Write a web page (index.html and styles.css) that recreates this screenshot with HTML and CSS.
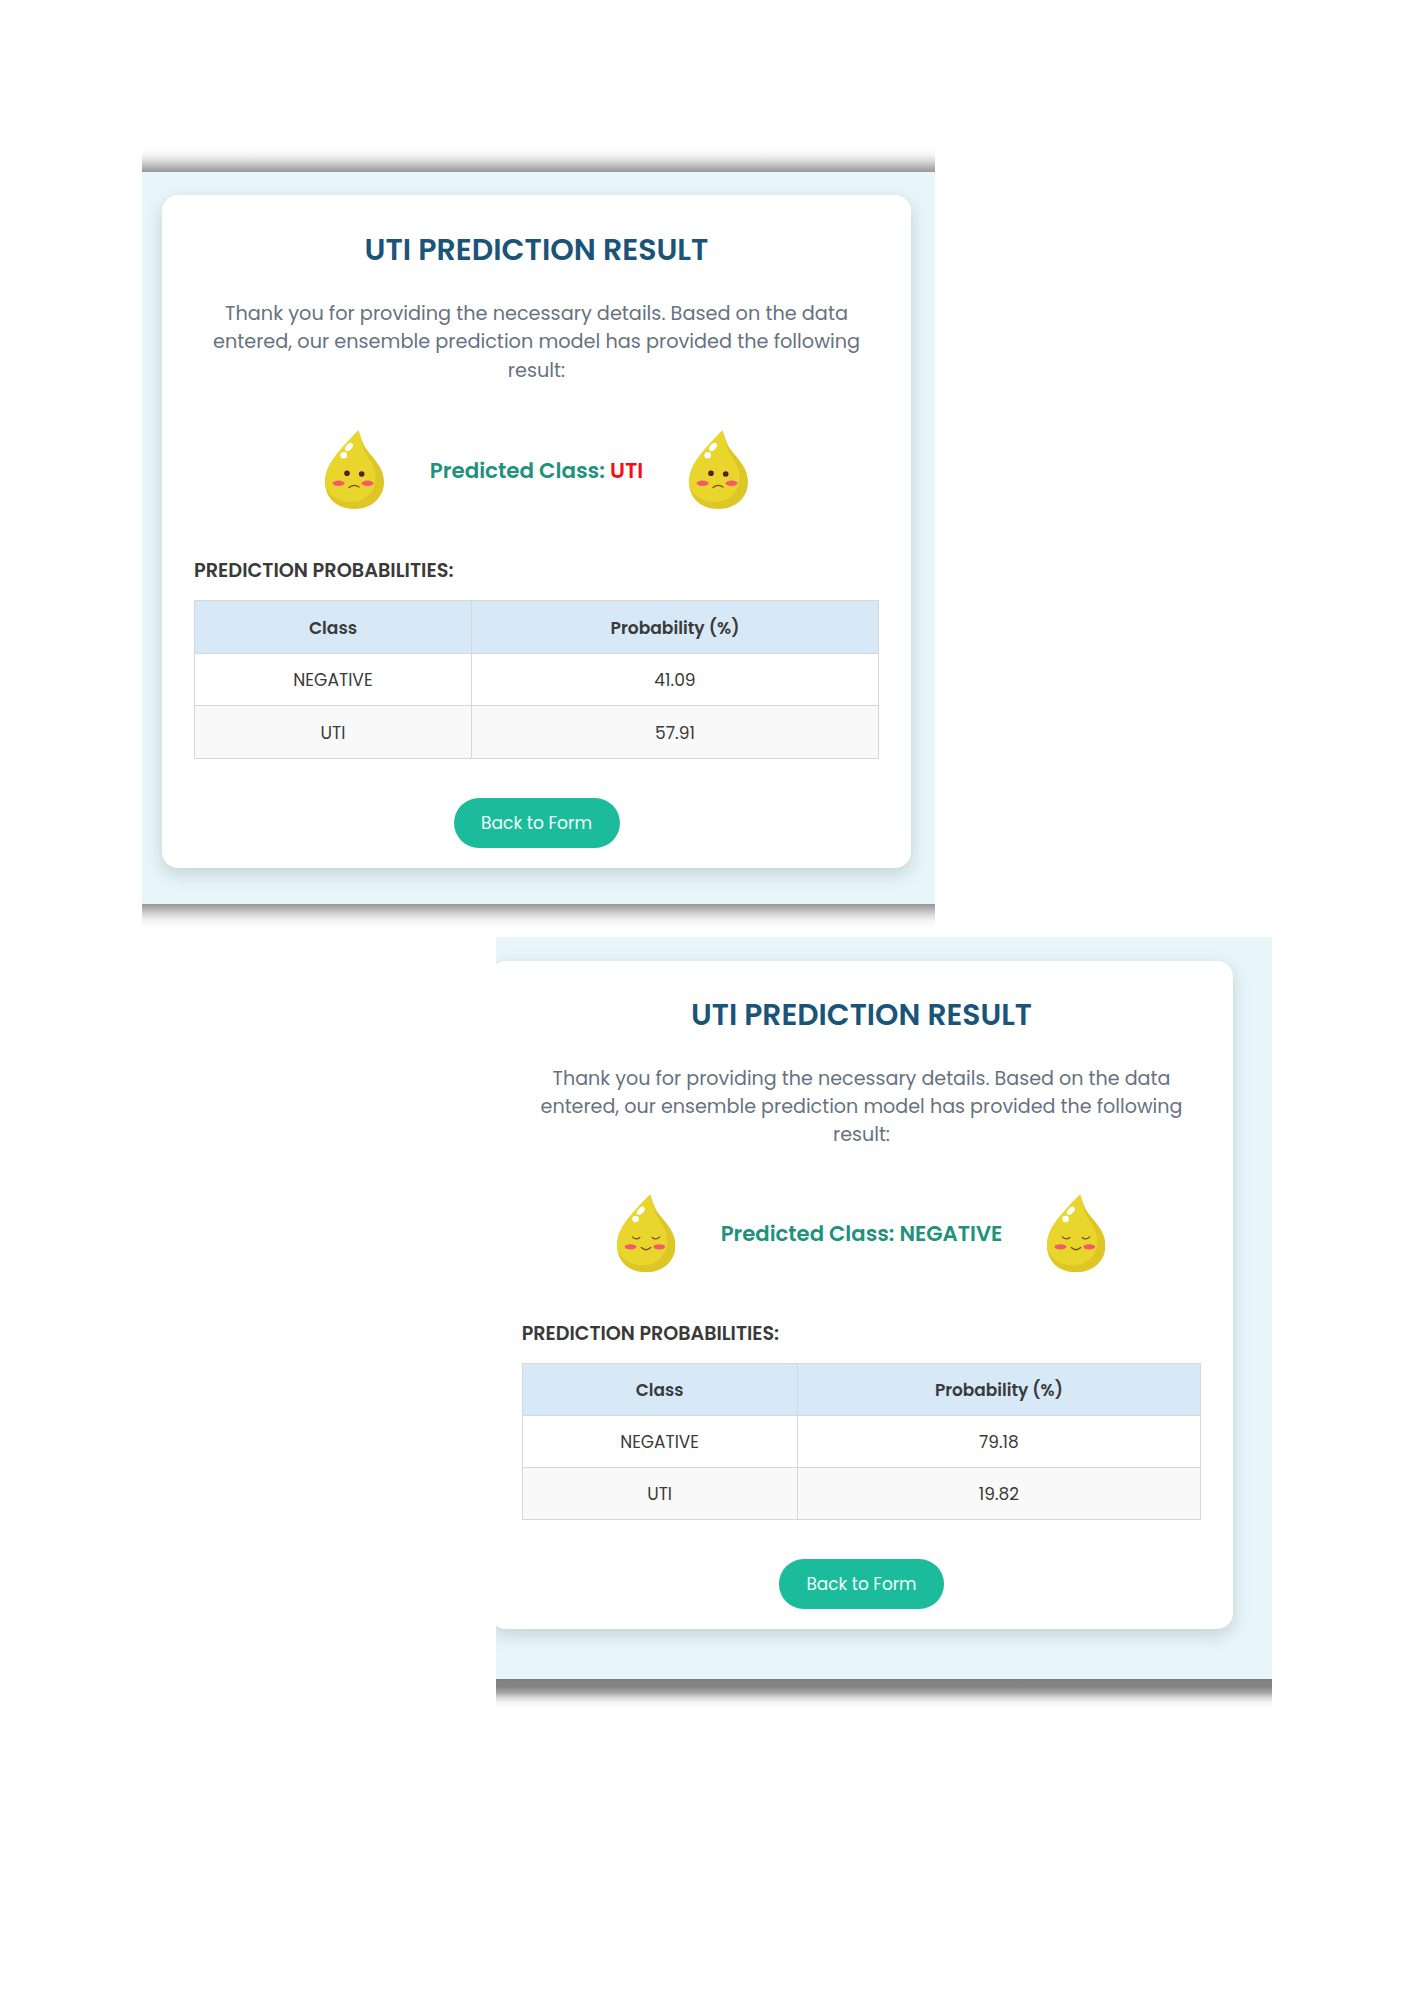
FILE: index.html
```
<!DOCTYPE html>
<html lang="en">
<head>
<meta charset="utf-8">
<title>UTI Prediction Result</title>
<link rel="stylesheet" href="styles.css">
</head>
<body>
<svg width="0" height="0" class="defs" aria-hidden="true">
  <defs>
    <clipPath id="dropClip"><path d="M33.500 0.500C36 7 37 13 42 20C49 29 59 38 59 52C59 68 46 79 29.500 79C12 79 0 68 0 52C0 38 9 27 17 18C23 11 28 6 33.500 0.500Z"/></clipPath>
    <symbol id="drop" viewBox="0 0 59 79">
      <g clip-path="url(#dropClip)">
        <rect width="59" height="79" fill="#dfc627"/>
        <path d="M0 0H34C36 8 36 14 40 22C44 30 50.500 35 50.500 48C50.500 62 40 72 26 72C14 72 5 66 0 56Z" fill="#e8d62d"/>
      </g>
      <ellipse cx="24" cy="17" rx="2.900" ry="4.900" transform="rotate(43 24 17)" fill="#fff"/>
      <circle cx="18.700" cy="25.300" r="3.300" fill="#fff"/>
      <ellipse cx="13.600" cy="53.300" rx="5.900" ry="2.700" fill="#f5586a"/>
      <ellipse cx="42.600" cy="53.300" rx="5.900" ry="2.700" fill="#f5586a"/>
    </symbol>
    <symbol id="sad" viewBox="0 0 59 79">
      <use href="#drop" width="59" height="79"/>
      <circle cx="22" cy="43.300" r="2.800" fill="#5c1a2c"/>
      <circle cx="36.700" cy="44" r="2.800" fill="#5c1a2c"/>
      <path d="M24 57.600Q29 53.400 34 57" fill="none" stroke="#7d4a1c" stroke-width="1.300" stroke-linecap="round"/>
    </symbol>
    <symbol id="happy" viewBox="0 0 59 79">
      <use href="#drop" width="59" height="79"/>
      <path d="M15.500 43.200Q19.500 47 23 43.800M35.500 43.800Q39 47 43 43.200M24.500 54Q29.300 58.500 34 54" fill="none" stroke="#7d4a1c" stroke-width="1.300" stroke-linecap="round"/>
    </symbol>
  </defs>
</svg>

<section class="panel panel-uti">
  <main class="card">
    <h2 class="title">UTI PREDICTION RESULT</h2>
    <p class="intro">Thank you for providing the necessary details. Based on the data<br>entered, our ensemble prediction model has provided the following<br>result:</p>
    <div class="result">
      <svg class="drop"><use href="#sad"/></svg>
      <p class="verdict">Predicted Class: <span class="positive">UTI</span></p>
      <svg class="drop"><use href="#sad"/></svg>
    </div>
    <h3 class="subtitle">PREDICTION PROBABILITIES:</h3>
    <table class="probs">
      <tr><th class="col-class">Class</th><th>Probability (%)</th></tr>
      <tr><td>NEGATIVE</td><td>41.09</td></tr>
      <tr><td>UTI</td><td>57.91</td></tr>
    </table>
    <a class="button">Back to Form</a>
  </main>
</section>

<section class="panel panel-negative">
  <main class="card">
    <h2 class="title">UTI PREDICTION RESULT</h2>
    <p class="intro">Thank you for providing the necessary details. Based on the data<br>entered, our ensemble prediction model has provided the following<br>result:</p>
    <div class="result">
      <svg class="drop"><use href="#happy"/></svg>
      <p class="verdict">Predicted Class: NEGATIVE</p>
      <svg class="drop"><use href="#happy"/></svg>
    </div>
    <h3 class="subtitle">PREDICTION PROBABILITIES:</h3>
    <table class="probs">
      <tr><th class="col-class">Class</th><th>Probability (%)</th></tr>
      <tr><td>NEGATIVE</td><td>79.18</td></tr>
      <tr><td>UTI</td><td>19.82</td></tr>
    </table>
    <a class="button">Back to Form</a>
  </main>
</section>
</body>
</html>
```
FILE: styles.css
```
* { box-sizing: border-box; }

body {
  margin: 0;
  height: 2000px;
  padding-top: 148px;
  background: #fff;
  color: #3a3a3a;
  font-family: Poppins, Inter, "Open Sans", sans-serif;
}

h2, h3, p { margin: 0; white-space: nowrap; }

.defs { position: absolute; }

.panel { overflow: hidden; }
.panel::before, .panel::after { content: ""; display: block; }

.panel-uti {
  --u: 1px;
  --nudge: 2px;
  width: 793px;
  margin-left: 142px;
  background: linear-gradient(#e8f5fa, #e8f5fa) 0 24px / 100% 732px no-repeat;
}
.panel-uti::before {
  height: 24px;
  margin-bottom: 23px;
  background: linear-gradient(to top, #979797, #b4b4b4 20%, #dadada 45%, #f4f4f4 70%, #fff);
}
.panel-uti::after {
  height: 24px;
  margin-top: 36px;
  background: linear-gradient(#979797, #b4b4b4 20%, #dadada 45%, #f4f4f4 70%, #fff);
}
.panel-uti .card { margin-left: 20px; }

.panel-negative {
  --u: 0.992px;
  --nudge: 0px;
  width: 776px;
  margin: 9px 0 0 496px;
  padding-top: 24px;
  background: linear-gradient(#e8f5fa, #e8f5fa) 0 0 / 100% 742px no-repeat;
}
.panel-negative::before { display: none; }
.panel-negative::after {
  height: 30px;
  margin-top: 50px;
  background: linear-gradient(#808080, #858585 27%, #a4a4a4 45%, #d8d8d8 62%, #f5f5f5 78%, #fff);
}
.panel-negative .card { margin-left: -6px; }

.card {
  display: flex;
  flex-direction: column;
  align-items: center;
  width: calc(749 * var(--u));
  height: calc(673 * var(--u));
  padding: calc(34.5 * var(--u)) calc(32 * var(--u)) 0;
  border-radius: calc(16 * var(--u));
  background: #fff;
  box-shadow: 0 6px 18px rgba(0, 30, 20, 0.16);
}

.title {
  font-size: calc(30 * var(--u));
  line-height: calc(40 * var(--u));
  font-weight: 600;
  color: #1b5479;
}

.intro {
  margin-top: calc(30.2 * var(--u));
  font-size: calc(19.27 * var(--u));
  line-height: calc(28.5 * var(--u));
  text-align: center;
  color: #66727f;
}

.result {
  display: flex;
  align-items: center;
  gap: calc(45.5 * var(--u));
  height: calc(79 * var(--u));
  margin-top: calc(44.9 * var(--u));
}
.drop {
  width: calc(59 * var(--u));
  height: calc(79 * var(--u));
}
.verdict {
  padding-top: var(--nudge);
  font-size: calc(21.4 * var(--u));
  font-weight: 600;
  color: #20917b;
}
.positive { color: #f80d10; }

.subtitle {
  align-self: flex-start;
  margin-top: calc(47.5 * var(--u));
  font-size: calc(19.27 * var(--u));
  line-height: calc(28 * var(--u));
  font-weight: 600;
}

.probs {
  width: calc(685 * var(--u));
  margin-top: calc(15.6 * var(--u));
  border-collapse: collapse;
  table-layout: fixed;
  font-size: calc(17.1 * var(--u));
  text-align: center;
}
.probs tr { height: calc(52.5 * var(--u)); }
.probs th, .probs td { padding: 2px 0 0; border: 1px solid #d5d7d8; }
.panel-negative .probs td { padding-top: 0; }
.probs th { background: #d7e9f7; font-weight: 600; }
.probs tr:nth-child(3) { background: #f9f9f9; }
.col-class { width: calc(277 * var(--u)); }

.button {
  width: calc(166 * var(--u));
  height: calc(50 * var(--u));
  margin-top: calc(39.5 * var(--u));
  border-radius: calc(25 * var(--u));
  background: #1cbb9b;
  color: #f1fffb;
  font-size: calc(17.1 * var(--u));
  line-height: calc(51 * var(--u));
  text-align: center;
}
```
